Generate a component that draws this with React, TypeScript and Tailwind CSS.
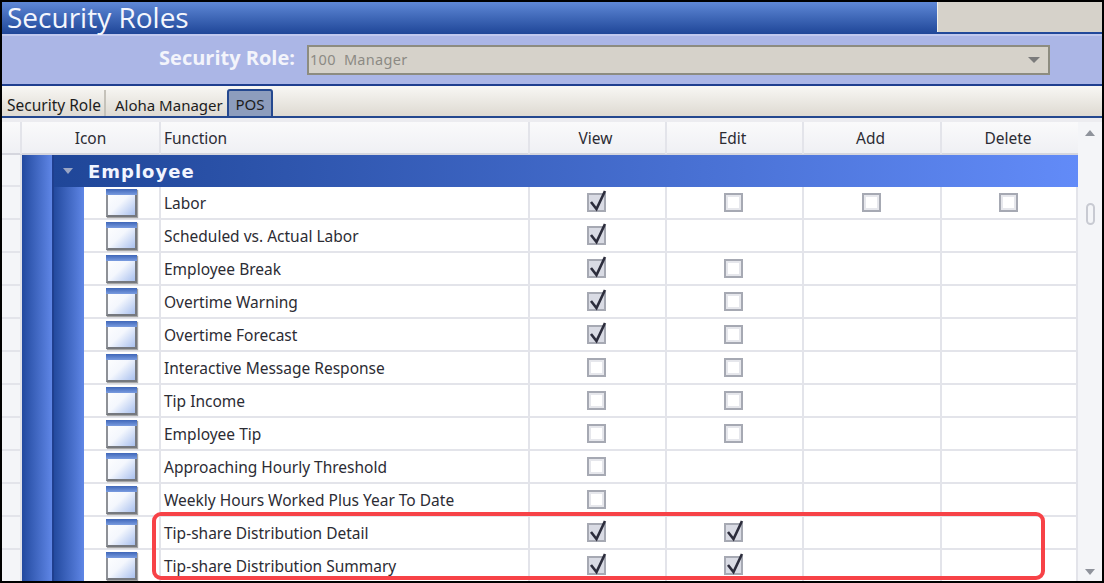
import { FunctionComponent } from "react";

type Row = { name: string; view?: boolean; edit?: boolean; add?: boolean; del?: boolean };

// undefined = no checkbox in that cell
const rows: Row[] = [
  { name: "Labor", view: true, edit: false, add: false, del: false },
  { name: "Scheduled vs. Actual Labor", view: true },
  { name: "Employee Break", view: true, edit: false },
  { name: "Overtime Warning", view: true, edit: false },
  { name: "Overtime Forecast", view: true, edit: false },
  { name: "Interactive Message Response", view: false, edit: false },
  { name: "Tip Income", view: false, edit: false },
  { name: "Employee Tip", view: false, edit: false },
  { name: "Approaching Hourly Threshold", view: false },
  { name: "Weekly Hours Worked Plus Year To Date", view: false },
  { name: "Tip-share Distribution Detail", view: true, edit: true },
  { name: "Tip-share Distribution Summary", view: true, edit: true },
];

const Check: FunctionComponent<{ checked?: boolean }> = ({ checked }) => {
  if (checked === undefined) return null;
  return (
    <div
      className={`relative w-[19px] h-[19px] border-2 border-[#a6a9b3] ${
        checked ? "bg-[#d9dbe4]" : "bg-white shadow-[inset_0_0_0_2px_#e6e7ec]"
      }`}
    >
      {checked && (
        <svg className="absolute left-[-1px] top-[-7px]" width="22" height="24" viewBox="0 0 22 24">
          <path d="M3 14 L8.5 21 L17 3" fill="none" stroke="#2c2d3c" strokeWidth="2.6" />
        </svg>
      )}
    </div>
  );
};

const WindowIcon: FunctionComponent = () => (
  <div className="w-[31px] h-[28px] border-2 border-[#75787e] border-t-0 border-l-[#8e9197] bg-gradient-to-br from-white via-[#f4f7fd] to-[#a9c0ee] shadow-[1px_1px_1px_#a5a5a5]">
    <div className="h-[6px] -mx-[2px] bg-gradient-to-b from-[#3f66b8] to-[#7a9ce0]" />
  </div>
);

const Cell: FunctionComponent<{ checked?: boolean }> = ({ checked }) => (
  <div className="flex items-center justify-center pr-[2px] border-r-2 border-b-2 border-[#e3e4ea]">
    <Check checked={checked} />
  </div>
);

const App: FunctionComponent = () => {
  return (
    <div className="w-[1104px] h-[583px] bg-[#ececf0] border-2 border-black relative font-['Noto_Sans',sans-serif]">
      <div className="h-[32px] flex bg-gradient-to-b from-[#5f88d6] to-[#1f4698]">
        <div className="flex-1 pl-[5px] text-[28px] leading-[30px] text-[#f4f6fd] font-['Open_Sans',sans-serif]">
          Security Roles
        </div>
        <div className="w-[165px] h-[30px] bg-[#d6d2ca] border-l border-[#f2f0ea]" />
      </div>
      <div className="h-[52px] bg-[#abb6e6] border-t-2 border-[#c0c8ee] border-b-2 border-b-[#1f3f8f] flex items-center">
        <div className="w-[293px] text-right mb-[4px] text-[20px] font-bold text-[#f3f4fb] font-['Open_Sans',sans-serif] whitespace-nowrap">
          Security Role:
        </div>
        <div className="ml-[12px] w-[743px] h-[30px] bg-[#d6d2ca] border-2 border-[#8d8c80] flex items-center justify-between pl-[1px] pr-[8px] text-[14.5px] text-[#8c8a84] tracking-[0.3px]">
          <span>100&nbsp; Manager</span>
          <div className="w-0 h-0 border-l-[6px] border-r-[6px] border-t-[6px] border-l-transparent border-r-transparent border-t-[#7b7b7b]" />
        </div>
      </div>
      <div className="h-[32px] bg-gradient-to-b from-[#f8f7f4] to-[#dedad2] border-b-2 border-[#24488f] flex items-end text-[15px] text-[#1c1c1c]">
        <div className="h-[26px] w-[104px] pl-[5px] text-[15.5px] leading-[30px] border-r-2 border-[#c5c2ba] whitespace-nowrap">Security Role</div>
        <div className="h-[26px] w-[121px] pl-[9px] leading-[30px] whitespace-nowrap">Aloha Manager</div>
        <div className="h-[29px] w-[46px] mb-[-2px] bg-[#8d9dbd] border-2 border-[#24488f] rounded-t-[3px] text-center leading-[27px]">POS</div>
      </div>
      <div className="flex h-[459px] mt-[4px] overflow-hidden">
        <div className="w-[1076px] flex flex-col text-[15.5px] text-[#2c2c34]">
          <div className="grid grid-cols-[20px_139px_369px_137px_137px_138px_136px] h-[33px] shrink-0 bg-gradient-to-b from-[#fafafb] to-[#eff0f4] border-b-2 border-[#d5d6de] text-center leading-[32px]">
            <div className="border-r-2 border-[#e3e4ea]" />
            <div className="border-r-2 border-[#e3e4ea]">Icon</div>
            <div className="border-r-2 border-[#e3e4ea] text-left pl-[3px]">Function</div>
            <div className="border-r-2 border-[#e3e4ea] pr-[4px]">View</div>
            <div className="border-r-2 border-[#e3e4ea] pr-[4px]">Edit</div>
            <div className="border-r-2 border-[#e3e4ea] pr-[3px]">Add</div>
            <div className="pr-[4px]">Delete</div>
          </div>
          <div className="grid grid-cols-[20px_32px_1fr] flex-1 bg-white min-h-0">
            <div className="flex flex-col bg-[#f4f5f8] border-r-2 border-[#e3e4ea]">
              <div className="h-[32px] shrink-0 border-b-2 border-[#e3e4ea]" />
              {rows.map((r) => (
                <div key={r.name} className="h-[33px] shrink-0 border-b-2 border-[#e3e4ea]" />
              ))}
            </div>
            <div className="bg-gradient-to-r from-[#234a9f] to-[#5f86e6] border-r-2 border-[#1f3f8f]" />
            <div className="flex flex-col">
              <div className="h-[32px] shrink-0 bg-gradient-to-r from-[#1f4698] to-[#628bf8] flex items-center">
                <div className="ml-[9px] w-0 h-0 border-l-[5px] border-r-[5px] border-t-[6px] border-l-transparent border-r-transparent border-t-[#9aa6c4]" />
                <div className="ml-[15px] text-[18px] font-bold tracking-[1px] text-[#f2f5ff] font-['DejaVu_Sans',sans-serif]">Employee</div>
              </div>
              {rows.map((r) => (
                <div key={r.name} className="grid grid-cols-[30px_77px_369px_137px_137px_138px_136px] h-[33px] shrink-0">
                  <div className="bg-gradient-to-r from-[#234a9f] to-[#5f86e6]" />
                  <div className="flex items-start pl-[22px] pt-[2px] border-r-2 border-b-2 border-[#e3e4ea]">
                    <WindowIcon />
                  </div>
                  <div className="flex items-center pl-[3px] pt-[2px] border-r-2 border-b-2 border-[#e3e4ea] whitespace-nowrap">{r.name}</div>
                  <Cell checked={r.view} />
                  <Cell checked={r.edit} />
                  <Cell checked={r.add} />
                  <Cell checked={r.del} />
                </div>
              ))}
            </div>
          </div>
        </div>
        <div className="w-[24px] bg-[#f4f5f8] flex flex-col items-center relative">
          <div className="mt-[8px] w-0 h-0 border-l-[5px] border-r-[5px] border-b-[6px] border-l-transparent border-r-transparent border-b-[#8f939c]" />
          <div className="mt-[67px] w-[9px] h-[22px] rounded-full border-2 border-[#c8cad2] bg-[#f4f5f8]" />
          <div className="absolute bottom-[6px] w-0 h-0 border-l-[5px] border-r-[5px] border-t-[6px] border-l-transparent border-r-transparent border-t-[#8f939c]" />
        </div>
      </div>
      {/* red callout around the tip-share rows */}
      <div className="absolute left-[150px] top-[510px] w-[893px] h-[68px] border-[4px] border-[#f74247] rounded-[9px]" />
    </div>
  );
};

export default App;
